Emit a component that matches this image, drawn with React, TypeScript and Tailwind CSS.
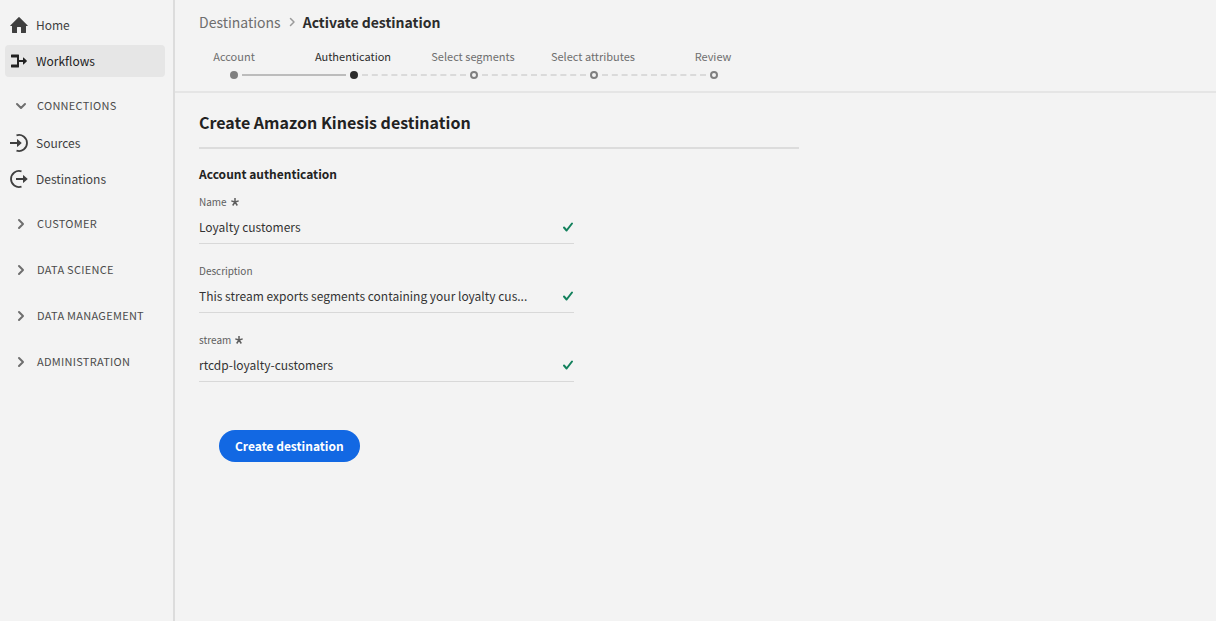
import type { ReactNode } from "react";

const HomeIcon = () => (
  <svg width="18" height="18" viewBox="0 0 18 18" fill="currentColor" aria-hidden="true" className="shrink-0">
    <path d="M17.67 9.4 9.43 1.18a.6.6 0 0 0-.86 0L.33 9.4A.4.4 0 0 0 .6 10H2v6.6a.4.4 0 0 0 .4.4H7v-5.6a.4.4 0 0 1 .4-.4h3.2a.4.4 0 0 1 .4.4V17h4.6a.4.4 0 0 0 .4-.4V10h1.4a.4.4 0 0 0 .27-.6z" />
  </svg>
);

const WorkflowsIcon = () => (
  <svg width="18" height="18" viewBox="0 0 18 18" fill="currentColor" aria-hidden="true" className="shrink-0">
    <path d="M1.4 2.500h7.2a.4.4 0 0 1 .4.4V8h4V5.700a.3.3 0 0 1 .5-.2l3.400 3.300a.3.3 0 0 1 0 .4l-3.400 3.300a.3.3 0 0 1-.5-.2V10H9v5.100a.4.4 0 0 1-.4.4H1.400a.4.4 0 0 1-.4-.4v-2.200a.4.4 0 0 1 .4-.4H7V5.500H1.400a.4.4 0 0 1-.4-.4V2.900a.4.4 0 0 1 .4-.4z" />
  </svg>
);

const SourcesIcon = () => (
  <svg width="18" height="18" viewBox="0 0 18 18" fill="currentColor" aria-hidden="true" className="shrink-0">
    <path d="M6.500 1.400A8 8 0 1 1 6.500 16.600" fill="none" stroke="currentColor" strokeWidth="1.800" />
    <path d="M0 8h7V5.400a.3.3 0 0 1 .5-.2l4 3.500a.4.4 0 0 1 0 .6l-4 3.500a.3.3 0 0 1-.5-.2V10H0z" />
  </svg>
);

const DestinationsIcon = () => (
  <svg width="18" height="18" viewBox="0 0 18 18" fill="currentColor" aria-hidden="true" className="shrink-0">
    <path d="M11.500 1.400A8 8 0 1 0 11.500 16.600" fill="none" stroke="currentColor" strokeWidth="1.800" />
    <path d="M6 8h7V5.400a.3.3 0 0 1 .5-.2l4 3.500a.4.4 0 0 1 0 .6l-4 3.500a.3.3 0 0 1-.5-.2V10H6z" />
  </svg>
);

const Chevron = ({ open = false }: { open?: boolean }) => (
  <svg
    width="12"
    height="12"
    viewBox="0 0 12 12"
    fill="none"
    stroke="currentColor"
    strokeWidth="2"
    strokeLinecap="round"
    strokeLinejoin="round"
    aria-hidden="true"
    className="shrink-0 text-[#6e6e6e]"
  >
    <path d={open ? "M2 4l4 4 4-4" : "M4 2l4 4-4 4"} />
  </svg>
);

const Asterisk = () => (
  <svg width="8" height="8" viewBox="0 0 8 8" fill="none" stroke="currentColor" strokeWidth="1.500" role="img" aria-label="required">
    <path d="M4 4V0M4 4 .3 2.900M4 4 1.700 7.500M4 4l2.300 3.500M4 4l3.700-1.100" />
  </svg>
);

const Checkmark = () => (
  <svg
    width="12"
    height="12"
    viewBox="0 0 12 12"
    fill="none"
    stroke="#12805c"
    strokeWidth="2"
    strokeLinecap="round"
    strokeLinejoin="round"
    aria-hidden="true"
    className="shrink-0"
  >
    <path d="M2 6.500 4.600 9.500 10 2.500" />
  </svg>
);

function NavLink({ icon, label, active = false }: { icon: ReactNode; label: string; active?: boolean }) {
  return (
    <a
      href="#"
      aria-current={active ? "page" : undefined}
      className={
        active
          ? "flex h-8 items-center gap-2 rounded bg-[#e6e6e6] pl-[5px] text-[#222222]"
          : "flex h-8 items-center gap-2 rounded pl-[5px] text-[#3f3f3f]"
      }
    >
      {icon}
      <span>{label}</span>
    </a>
  );
}

function NavSection({ label, open = false }: { label: string; open?: boolean }) {
  return (
    <button
      type="button"
      aria-expanded={open}
      className="flex h-8 w-full items-center gap-2.5 pl-2.5 text-[11px] tracking-wide text-[#4b4b4b] uppercase"
    >
      <Chevron open={open} />
      <span className="pb-0.5">{label}</span>
    </button>
  );
}

const steps = ["Account", "Authentication", "Select segments", "Select attributes", "Review"];
const currentStep = 1;

function Stepper() {
  return (
    <div className="mt-3.5">
      <ol className="grid grid-cols-[118px_repeat(4,120px)] text-center text-[11px] leading-4 text-[#6e6e6e]">
        {steps.map((step, i) => (
          <li
            key={step}
            aria-current={i === currentStep ? "step" : undefined}
            className={i === currentStep ? "text-[#2c2c2c]" : ""}
          >
            {step}
          </li>
        ))}
      </ol>
      <div className="mt-[7px] flex items-center gap-1 pl-[55px]" aria-hidden="true">
        {steps.map((step, i) => [
          i > 0 && (
            <span
              key={step + "-line"}
              className={
                i <= currentStep
                  ? "w-[104px] border-t-2 border-[#bcbcbc]"
                  : "w-[104px] border-t-2 border-dashed border-[#dadada]"
              }
            />
          ),
          <span
            key={step}
            className={
              i < currentStep
                ? "size-2 rounded-full bg-[#808080]"
                : i === currentStep
                  ? "size-2 rounded-full bg-[#2c2c2c]"
                  : "size-2 rounded-full border-2 border-[#808080]"
            }
          />,
        ])}
      </div>
    </div>
  );
}

function Field({ id, label, value, required = false }: { id: string; label: string; value: string; required?: boolean }) {
  return (
    <div>
      <label htmlFor={id} className="flex h-4 items-center gap-1 text-[10px] leading-4 text-[#5e5e5e]">
        {label}
        {required && <Asterisk />}
      </label>
      <div className="mt-px flex h-[33px] items-center gap-2 border-b border-[#d8d8d8]">
        <input
          id={id}
          type="text"
          required={required}
          defaultValue={value}
          className="h-full min-w-0 flex-1 bg-transparent pb-0.5 text-[#333333] outline-none"
        />
        <Checkmark />
      </div>
    </div>
  );
}

export default function App() {
  return (
    <div className="flex min-h-screen bg-[#f3f3f3] font-['Noto_Sans_CJK_SC','Open_Sans',sans-serif] text-xs leading-5">
      <nav aria-label="Main" className="w-[175px] shrink-0 border-r-2 border-[#dcdcdc] pt-[9px] pr-2 pl-[5px]">
        <div className="flex flex-col gap-1">
          <NavLink icon={<HomeIcon />} label="Home" />
          <NavLink icon={<WorkflowsIcon />} label="Workflows" active />
        </div>
        <div className="mt-[13px]">
          <NavSection label="Connections" open />
          <div className="mt-[5px] flex flex-col gap-1">
            <NavLink icon={<SourcesIcon />} label="Sources" />
            <NavLink icon={<DestinationsIcon />} label="Destinations" />
          </div>
        </div>
        <div className="mt-[13px] flex flex-col gap-3.5">
          <NavSection label="Customer" />
          <NavSection label="Data science" />
          <NavSection label="Data management" />
          <NavSection label="Administration" />
        </div>
      </nav>

      <div className="min-w-0 flex-1">
        <header className="border-b-2 border-[#e5e5e5] pt-2.5 pb-3">
          <nav aria-label="Breadcrumb" className="flex items-center gap-[5px] pl-6 text-sm leading-6">
            <a href="#" className="text-[#6e6e6e]">
              Destinations
            </a>
            <svg width="12" height="12" viewBox="0 0 12 12" fill="none" stroke="#9a9a9a" strokeWidth="1.500" strokeLinecap="round" strokeLinejoin="round" aria-hidden="true">
              <path d="M4.500 2.500 8 6 4.500 9.500" />
            </svg>
            <span aria-current="page" className="font-bold text-[#2c2c2c]">
              Activate destination
            </span>
          </nav>
          <Stepper />
        </header>

        <main className="px-6 pt-[17px]">
          <h1 className="max-w-[600px] border-b-2 border-[#dcdcdc] pb-[13px] text-base leading-6 font-bold text-[#222222]">
            Create Amazon Kinesis destination
          </h1>
          <form onSubmit={(e) => e.preventDefault()}>
            <h2 className="mt-[15px] font-bold text-[#222222]">Account authentication</h2>
            <div className="mt-2.5 flex max-w-[375px] flex-col gap-[19px]">
              <Field id="name" label="Name" value="Loyalty customers" required />
              <Field id="description" label="Description" value="This stream exports segments containing your loyalty cus..." />
              <Field id="stream" label="stream" value="rtcdp-loyalty-customers" required />
            </div>
            <button type="submit" className="mt-12 ml-5 h-8 rounded-full bg-[#1268e3] px-4 font-bold text-white">
              Create destination
            </button>
          </form>
        </main>
      </div>
    </div>
  );
}
